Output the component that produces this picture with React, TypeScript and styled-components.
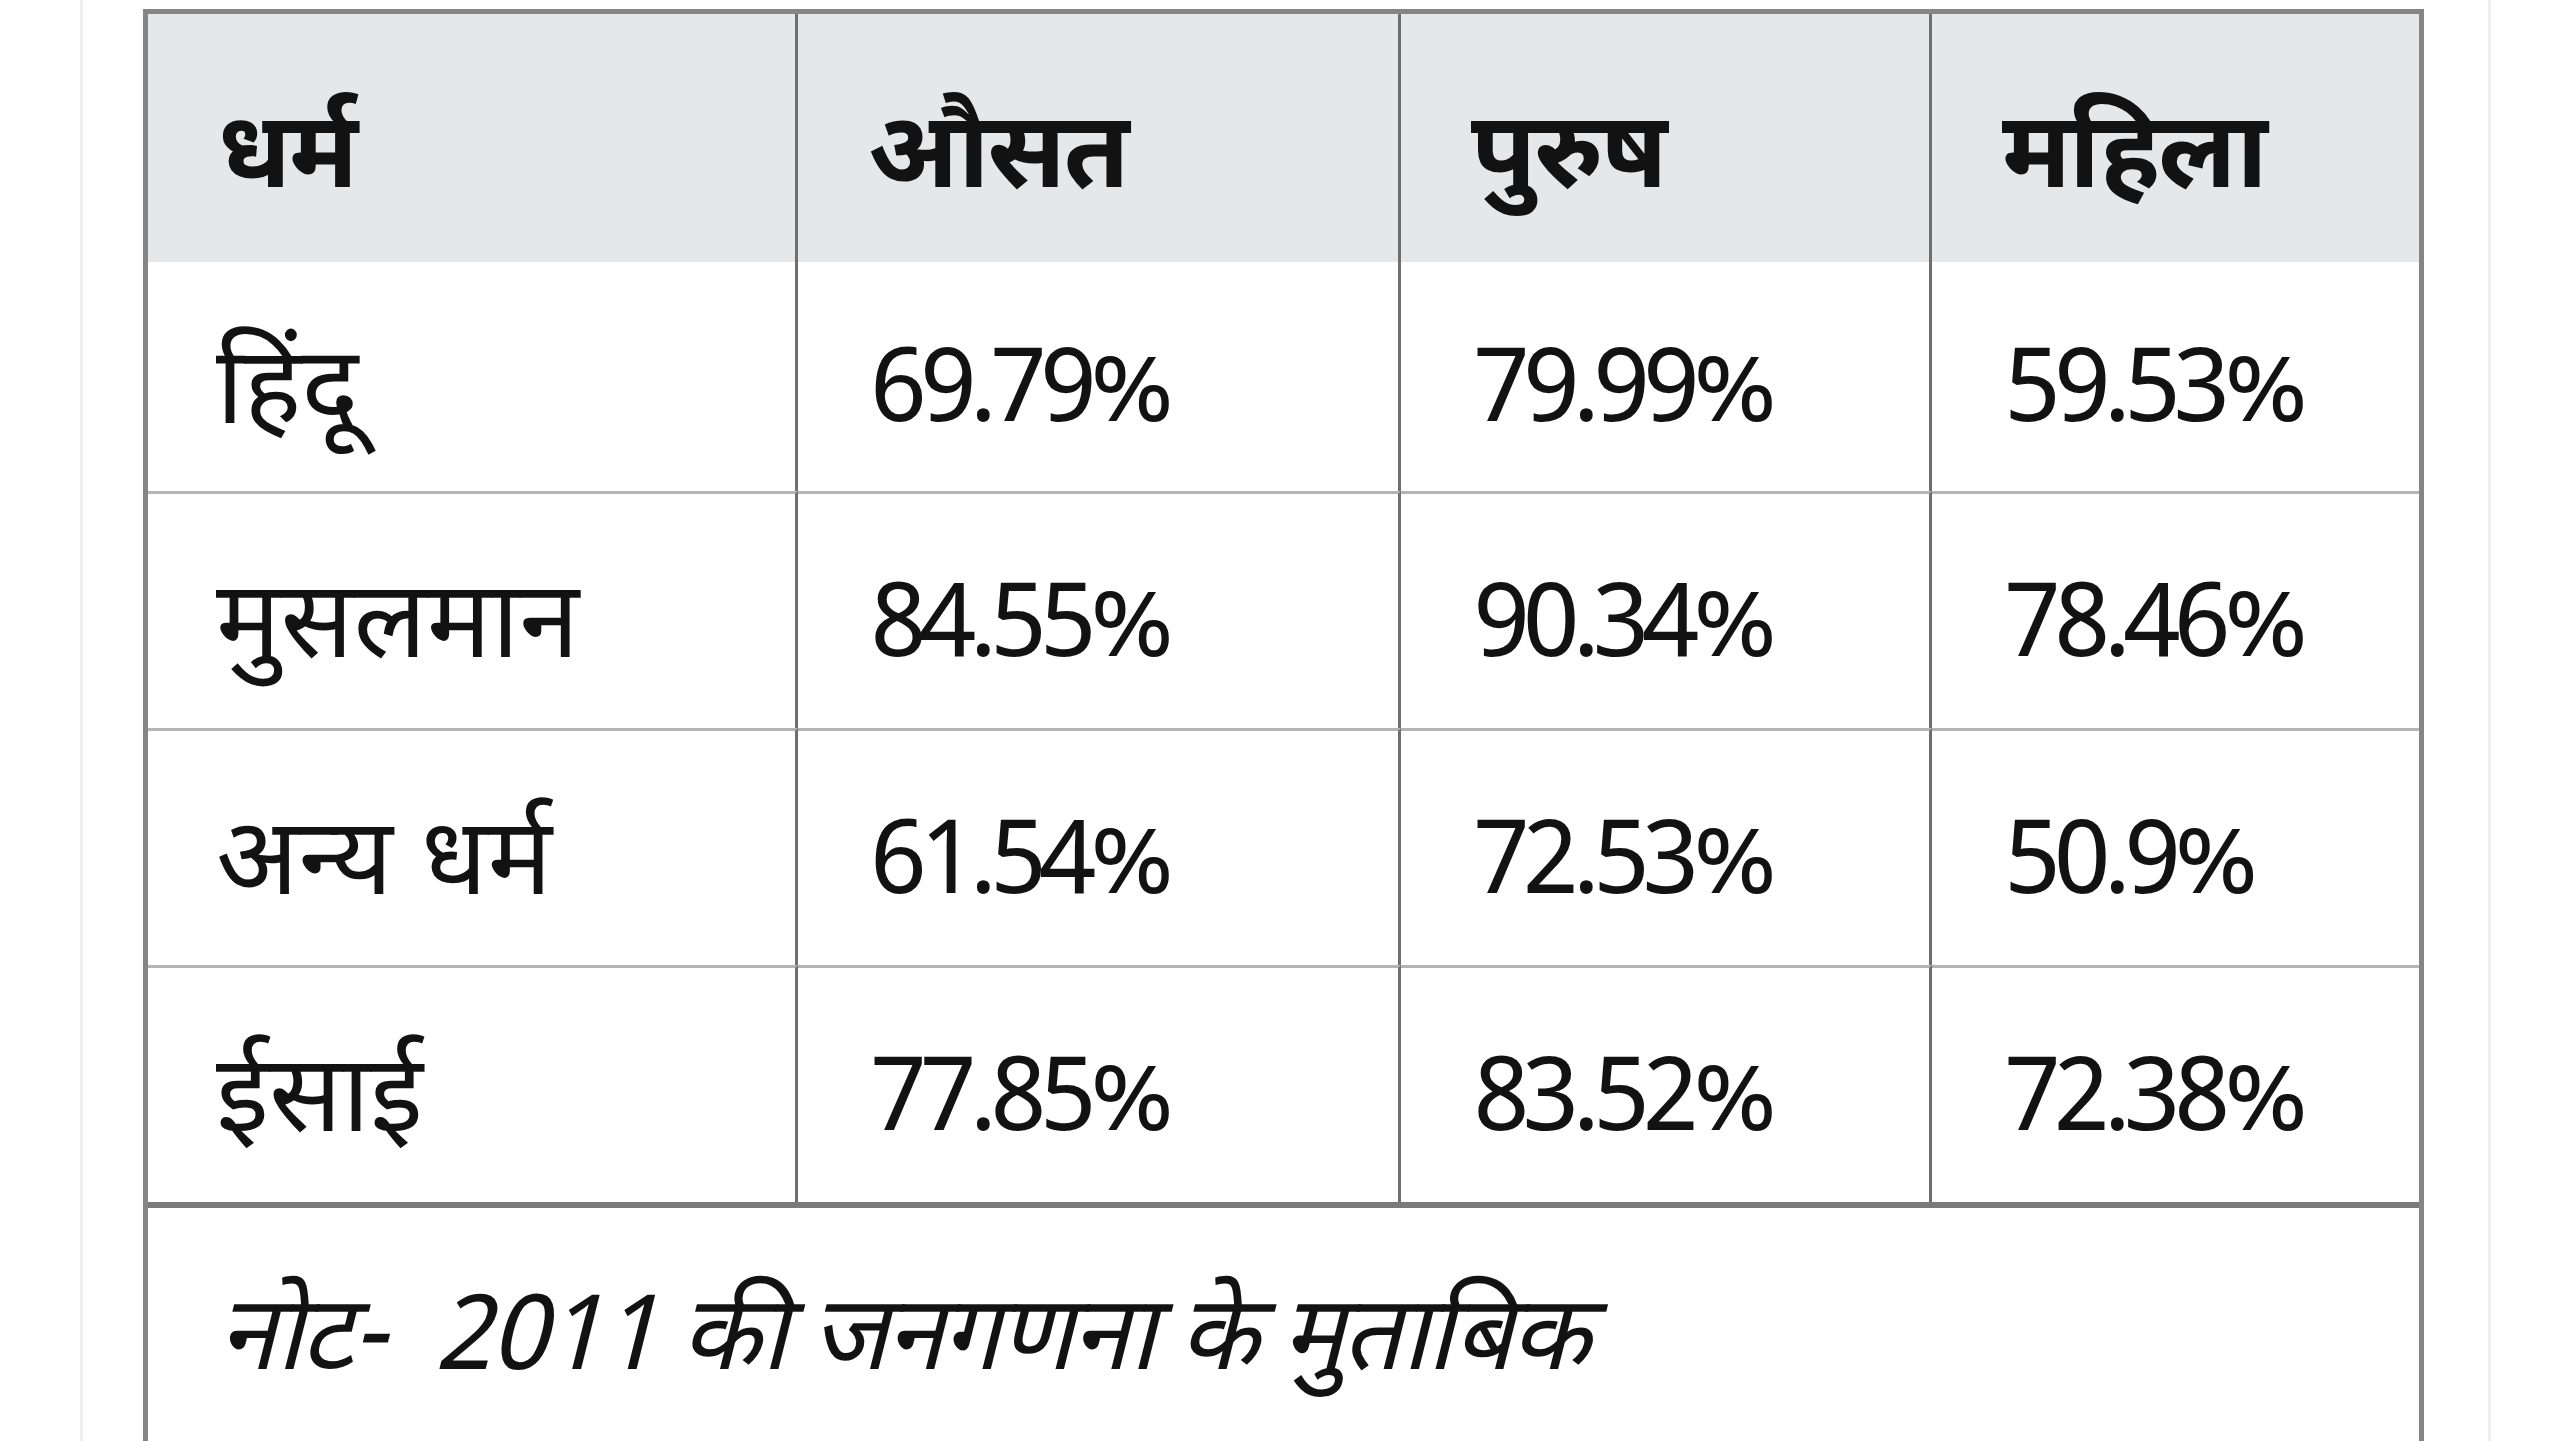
import React from "react";
import styled, { createGlobalStyle } from "styled-components";

const GlobalStyle = createGlobalStyle`
  html, body {
    margin: 0;
    padding: 0;
    background: #ffffff;
    overflow: hidden;
  }
  body {
    font-family: "Noto Sans Devanagari", "Noto Sans", "Lohit Devanagari", sans-serif;
    color: #121212;
  }
`;

const Page = styled.div`
  margin-left: 80px;
  width: 2411px;
  height: 1441px;
  box-sizing: border-box;
  border-left: 3px solid #efefef;
  border-right: 3px solid #efefef;
  padding: 9px 62px 0 60px;
`;

const Table = styled.table`
  width: 2281px;
  border-collapse: separate;
  border-spacing: 0;
  border: 5px solid #858585;
  border-bottom: none;
  table-layout: fixed;
`;

const HeadRow = styled.tr`
  height: 248px;
  background: #e6e7e9;
`;

const BodyRow = styled.tr<{ $first?: boolean }>`
  height: ${(p) => (p.$first ? 229 : 237)}px;
`;

const HeadCell = styled.th<{ $last?: boolean }>`
  padding: 46px 0 0 70px;
  text-align: left;
  vertical-align: middle;
  font-size: 106px;
  font-weight: 700;
  line-height: 1;
  letter-spacing: -2px;
  border-right: ${(p) => (p.$last ? "none" : "3px solid #6e6e6e")};
`;

const Cell = styled.td<{ $last?: boolean; $first?: boolean; $label?: boolean }>`
  padding: 40px 0 0 ${(p) => (p.$label ? 68 : 72)}px;
  vertical-align: middle;
  font-size: ${(p) => (p.$label ? 108 : 103)}px;
  line-height: 1;
  letter-spacing: ${(p) => (p.$label ? 0 : -7)}px;
  border-right: ${(p) => (p.$last ? "none" : "3px solid #6e6e6e")};
  border-top: ${(p) => (p.$first ? "none" : "3px solid #b4b4b4")};
`;

const NoteCell = styled.td`
  height: 260px;
  padding: 6px 0 0 70px;
  vertical-align: middle;
  font-size: 104px;
  font-style: italic;
  line-height: 1;
  letter-spacing: -2px;
  white-space: pre;
  border-top: 6px solid #7a7a7a;
`;

const columns = ["धर्म", "औसत", "पुरुष", "महिला"];

const rows = [
  ["हिंदू", "69.79%", "79.99%", "59.53%"],
  ["मुसलमान", "84.55%", "90.34%", "78.46%"],
  ["अन्य धर्म", "61.54%", "72.53%", "50.9%"],
  ["ईसाई", "77.85%", "83.52%", "72.38%"],
];

const widths = [650, 603, 531, 487];

export default function App() {
  return (
    <>
      <GlobalStyle />
      <Page>
        <Table>
          <colgroup>
            {widths.map((w, i) => (
              <col key={i} style={{ width: w }} />
            ))}
          </colgroup>
          <thead>
            <HeadRow>
              {columns.map((c, i) => (
                <HeadCell key={c} $last={i === columns.length - 1}>
                  {c}
                </HeadCell>
              ))}
            </HeadRow>
          </thead>
          <tbody>
            {rows.map((r, ri) => (
              <BodyRow key={r[0]} $first={ri === 0}>
                {r.map((v, i) => (
                  <Cell
                    key={i}
                    $first={ri === 0}
                    $label={i === 0}
                    $last={i === r.length - 1}
                  >
                    {v}
                  </Cell>
                ))}
              </BodyRow>
            ))}
            <tr>
              <NoteCell colSpan={4}>{"नोट-  2011 की जनगणना के मुताबिक"}</NoteCell>
            </tr>
          </tbody>
        </Table>
      </Page>
    </>
  );
}
